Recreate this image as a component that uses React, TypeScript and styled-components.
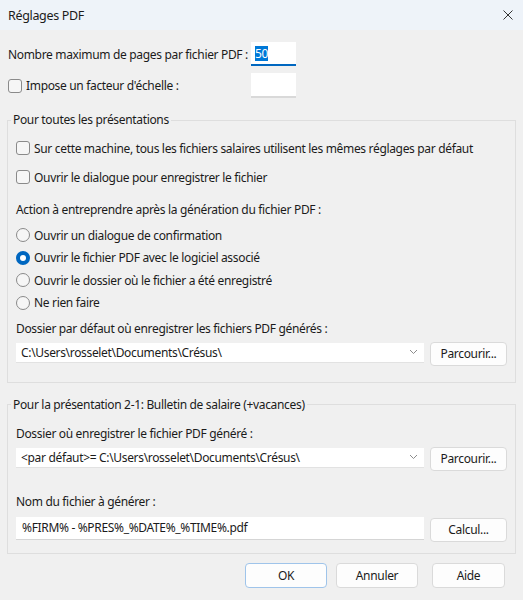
import styled, { createGlobalStyle } from "styled-components";

const GlobalStyle = createGlobalStyle`
  html, body {
    margin: 0;
    padding: 0;
    background: #f0f0f0;
  }
  body {
    font-family: "Noto Sans", "Open Sans", sans-serif;
    font-size: 12px;
    letter-spacing: -0.33px;
    color: #1b1b1b;
  }
`;

const Dialog = styled.div`
  width: 523px;
  height: 600px;
  background: #f0f0f0;
  display: flex;
  flex-direction: column;
  overflow: hidden;
`;

const TitleBar = styled.div`
  height: 30px;
  flex-shrink: 0;
  background: #eef3f9;
  display: flex;
  align-items: center;
  justify-content: space-between;
  padding: 0 8px;
  font-size: 12.5px;
`;

const CloseButton = styled.div`
  width: 30px;
  display: flex;
  justify-content: flex-end;
  padding-right: 2px;
`;

const Content = styled.div`
  display: flex;
  flex-direction: column;
  padding: 12px 8px 0 8px;
`;

const FieldRow = styled.div<{ $top?: number }>`
  display: grid;
  grid-template-columns: 243px 45px;
  align-items: center;
  margin-top: ${({ $top }) => $top ?? 0}px;
`;

const Label = styled.span`
  white-space: nowrap;
`;

const SmallInput = styled.div<{ $focused?: boolean }>`
  height: ${({ $focused }) => ($focused ? 22 : 23)}px;
  background: #ffffff;
  border-bottom: ${({ $focused }) =>
    $focused ? "2px solid #0067c0" : "2px solid #d9d9d9"};
  display: flex;
  align-items: center;
  padding-left: 4px;
`;

const Selected = styled.span`
  background: #0078d7;
  color: #ffffff;
  line-height: 15px;
`;

const CheckRow = styled.label<{ $top?: number; $h?: number }>`
  display: flex;
  align-items: center;
  gap: 4px;
  height: ${({ $h }) => $h ?? 20}px;
  margin-top: ${({ $top }) => $top ?? 0}px;
  white-space: nowrap;
`;

const CheckBox = styled.span`
  width: 12px;
  height: 12px;
  border: 1px solid #8a8a8a;
  border-radius: 3px;
  background: #f6f6f6;
  flex-shrink: 0;
`;

const Radio = styled.span<{ $on?: boolean }>`
  width: ${({ $on }) => ($on ? 14 : 12)}px;
  height: ${({ $on }) => ($on ? 14 : 12)}px;
  border-radius: 50%;
  border: ${({ $on }) => ($on ? "none" : "1px solid #8a8a8a")};
  background: ${({ $on }) => ($on ? "#0067c0" : "#f6f6f6")};
  flex-shrink: 0;
  display: flex;
  align-items: center;
  justify-content: center;
  &::after {
    content: "";
    display: ${({ $on }) => ($on ? "block" : "none")};
    width: 6px;
    height: 6px;
    border-radius: 50%;
    background: #ffffff;
  }
`;

const RadioList = styled.div`
  display: flex;
  flex-direction: column;
  gap: 0.5px;
  margin-top: 5px;
`;

const Group = styled.fieldset<{ $top: number; $bottom: number }>`
  margin: ${({ $top }) => $top}px -1px 0 -1px;
  padding: 0 8px ${({ $bottom }) => $bottom}px 8px;
  border: 1px solid #dedede;
  border-radius: 0;
  min-width: 0;
  display: flex;
  flex-direction: column;
`;

const Legend = styled.legend`
  padding: 0 2px;
  margin-left: -5px;
  line-height: 16px;
  font-size: 12px;
`;

const TextLine = styled.div<{ $top?: number }>`
  height: 20px;
  display: flex;
  align-items: center;
  margin-top: ${({ $top }) => $top ?? 0}px;
  white-space: nowrap;
`;

const ControlRow = styled.div<{ $top?: number }>`
  display: flex;
  align-items: flex-start;
  gap: 6px;
  margin-top: ${({ $top }) => $top ?? 0}px;
`;

const Combo = styled.div`
  flex: 1;
  height: 19px;
  margin-top: 1px;
  background: #ffffff;
  border-bottom: 1px solid #e2e2e2;
  display: flex;
  align-items: center;
  justify-content: space-between;
  padding: 0 6px 0 5px;
  white-space: nowrap;
`;

const TextField = styled.div`
  flex: 1;
  height: 22px;
  background: #ffffff;
  border-bottom: 1px solid #d5d5d5;
  display: flex;
  align-items: center;
  padding-left: 6px;
  white-space: nowrap;
`;

const Button = styled.button<{ $w: number; $default?: boolean; $mt?: number }>`
  width: ${({ $w }) => $w}px;
  height: 24px;
  margin-top: ${({ $mt }) => $mt ?? 0}px;
  flex-shrink: 0;
  background: #fdfdfd;
  border: 1px solid ${({ $default }) => ($default ? "#9fc4ea" : "#dadada")};
  border-radius: 4px;
  font-family: inherit;
  font-size: 12px;
  letter-spacing: inherit;
  color: #1b1b1b;
  padding: 0;
`;

const Footer = styled.div`
  display: flex;
  justify-content: flex-end;
  margin-top: 9px;
  padding-right: 10px;
`;

const FooterButton = styled(Button)<{ $ml?: number }>`
  height: 25px;
  margin-left: ${({ $ml }) => $ml ?? 0}px;
`;

function Chevron() {
  return (
    <svg width="9" height="6" viewBox="0 0 9 6">
      <path d="M1 1 L4.5 4.5 L8 1" fill="none" stroke="#8c8c8c" strokeWidth="1" />
    </svg>
  );
}

function CloseIcon() {
  return (
    <svg width="10" height="10" viewBox="0 0 10 10">
      <path d="M0.5 0.5 L9.5 9.5 M9.5 0.5 L0.5 9.5" stroke="#333" strokeWidth="1" />
    </svg>
  );
}

const actions = [
  { label: "Ouvrir un dialogue de confirmation", on: false },
  { label: "Ouvrir le fichier PDF avec le logiciel associé", on: true },
  { label: "Ouvrir le dossier où le fichier a été enregistré", on: false },
  { label: "Ne rien faire", on: false },
];

export default function App() {
  return (
    <>
      <GlobalStyle />
      <Dialog>
        <TitleBar>
          <span>Réglages PDF</span>
          <CloseButton>
            <CloseIcon />
          </CloseButton>
        </TitleBar>

        <Content>
          <FieldRow>
            <Label>Nombre maximum de pages par fichier PDF :</Label>
            <SmallInput $focused>
              <Selected>50</Selected>
            </SmallInput>
          </FieldRow>
          <FieldRow $top={7}>
            <CheckRow $h={25}>
              <CheckBox />
              Impose un facteur d'échelle :
            </CheckRow>
            <SmallInput />
          </FieldRow>

          <Group $top={14} $bottom={16}>
            <Legend>Pour toutes les présentations</Legend>
            <CheckRow $top={10}>
              <CheckBox />
              Sur cette machine, tous les fichiers salaires utilisent les mêmes réglages par défaut
            </CheckRow>
            <CheckRow $top={9}>
              <CheckBox />
              Ouvrir le dialogue pour enregistrer le fichier
            </CheckRow>
            <TextLine $top={12}>Action à entreprendre après la génération du fichier PDF :</TextLine>
            <RadioList>
              {actions.map((a) => (
                <CheckRow key={a.label} $h={22}>
                  <Radio $on={a.on} />
                  {a.label}
                </CheckRow>
              ))}
            </RadioList>
            <TextLine $top={5}>Dossier par défaut où enregistrer les fichiers PDF générés :</TextLine>
            <ControlRow $top={3}>
              <Combo>
                <span>C:\Users\rosselet\Documents\Crésus\</span>
                <Chevron />
              </Combo>
              <Button $w={77}>Parcourir...</Button>
            </ControlRow>
          </Group>

          <Group $top={14} $bottom={11}>
            <Legend>Pour la présentation 2-1: Bulletin de salaire (+vacances)</Legend>
            <TextLine $top={11}>Dossier où enregistrer le fichier PDF généré :</TextLine>
            <ControlRow $top={3}>
              <Combo>
                <span>&lt;par défaut&gt;= C:\Users\rosselet\Documents\Crésus\</span>
                <Chevron />
              </Combo>
              <Button $w={77}>Parcourir...</Button>
            </ControlRow>
            <TextLine $top={21}>Nom du fichier à générer :</TextLine>
            <ControlRow $top={5}>
              <TextField>%FIRM% - %PRES%_%DATE%_%TIME%.pdf</TextField>
              <Button $w={77} $mt={1}>Calcul...</Button>
            </ControlRow>
          </Group>

          <Footer>
            <FooterButton $w={82} $default>OK</FooterButton>
            <FooterButton $w={82} $ml={9}>Annuler</FooterButton>
            <FooterButton $w={73} $ml={14}>Aide</FooterButton>
          </Footer>
        </Content>
      </Dialog>
    </>
  );
}
